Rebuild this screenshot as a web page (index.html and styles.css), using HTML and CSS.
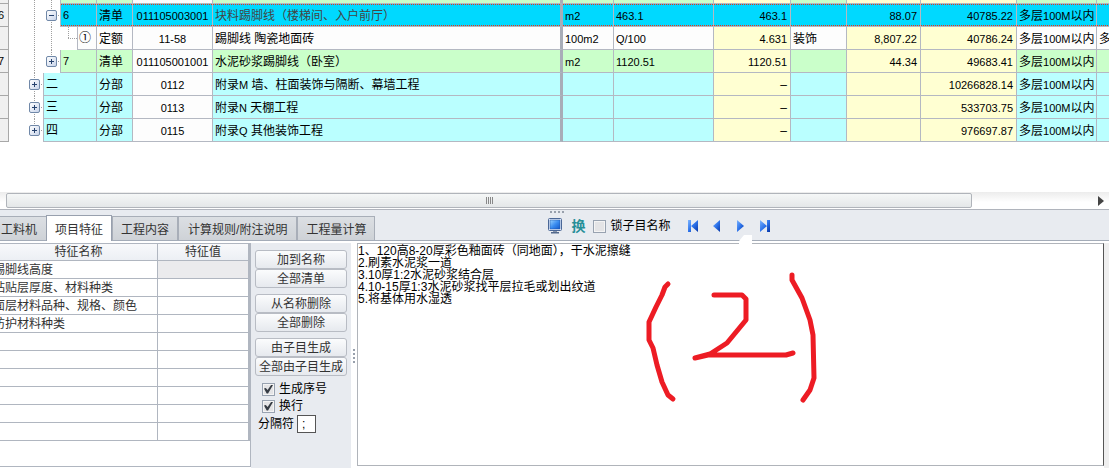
FILE: index.html
```html
<!DOCTYPE html>
<html lang="zh-CN">
<head>
<meta charset="utf-8">
<title>工程量清单</title>
<link rel="stylesheet" href="styles.css">
</head>
<body>
<main class="app">
  <section class="sheet">
    <table class="grid">
      <colgroup>
        <col class="w-row"><col class="w-tree"><col class="w-kind"><col class="w-code"><col class="w-name">
        <col class="w-unit"><col class="w-expr"><col class="w-qty"><col class="w-major"><col class="w-price">
        <col class="w-total"><col class="w-floor"><col class="w-rest">
      </colgroup>
      <tbody>
        <tr class="item cut">
          <th></th><td class="tree"><div class="branch"><span class="gutter deep"></span><span class="seq"></span></div></td>
          <td></td><td class="code"></td><td class="name"></td><td></td><td></td><td class="calc"></td><td></td><td class="calc"></td><td class="calc"></td><td></td><td></td>
        </tr>
        <tr class="item selected">
          <th><span class="n">6</span></th>
          <td class="tree"><div class="branch"><span class="gutter deep"><button class="expander minus" aria-label="折叠"></button></span><span class="seq n">6</span></div></td>
          <td>清单</td><td class="code n">011105003001</td><td class="name">块料踢脚线（楼梯间、入户前厅）</td>
          <td class="n">m2</td><td class="n">463.1</td><td class="calc n">463.1</td><td></td><td class="calc n">88.07</td><td class="calc n">40785.22</td><td>多层<span class="n">100M</span>以内</td><td></td>
        </tr>
        <tr class="quota">
          <th></th>
          <td class="tree"><div class="branch"><span class="gutter leaf"></span><span class="seq">①</span></div></td>
          <td>定额</td><td class="code n">11-58</td><td class="name">踢脚线 陶瓷地面砖</td>
          <td class="n">100m2</td><td class="n">Q/100</td><td class="calc n">4.631</td><td>装饰</td><td class="calc n">8,807.22</td><td class="calc n">40786.24</td><td>多层<span class="n">100M</span>以内</td><td>多层</td>
        </tr>
        <tr class="item">
          <th><span class="n">7</span></th>
          <td class="tree"><div class="branch"><span class="gutter deep last"><button class="expander" aria-label="展开"></button></span><span class="seq n">7</span></div></td>
          <td>清单</td><td class="code n">011105001001</td><td class="name">水泥砂浆踢脚线（卧室）</td>
          <td class="n">m2</td><td class="n">1120.51</td><td class="calc n">1120.51</td><td></td><td class="calc n">44.34</td><td class="calc n">49683.41</td><td>多层<span class="n">100M</span>以内</td><td></td>
        </tr>
        <tr class="part">
          <th></th>
          <td class="tree"><div class="branch"><span class="gutter"><button class="expander" aria-label="展开"></button></span><span class="seq">二</span></div></td>
          <td>分部</td><td class="code n">0112</td><td class="name">附录<span class="n">M</span> 墙、柱面装饰与隔断、幕墙工程</td>
          <td></td><td></td><td class="calc dash">–</td><td></td><td class="calc"></td><td class="calc n">10266828.14</td><td>多层<span class="n">100M</span>以内</td><td></td>
        </tr>
        <tr class="part">
          <th></th>
          <td class="tree"><div class="branch"><span class="gutter"><button class="expander" aria-label="展开"></button></span><span class="seq">三</span></div></td>
          <td>分部</td><td class="code n">0113</td><td class="name">附录<span class="n">N</span> 天棚工程</td>
          <td></td><td></td><td class="calc dash">–</td><td></td><td class="calc"></td><td class="calc n">533703.75</td><td>多层<span class="n">100M</span>以内</td><td></td>
        </tr>
        <tr class="part">
          <th></th>
          <td class="tree"><div class="branch"><span class="gutter last"><button class="expander" aria-label="展开"></button></span><span class="seq">四</span></div></td>
          <td>分部</td><td class="code n">0115</td><td class="name">附录<span class="n">Q</span> 其他装饰工程</td>
          <td></td><td></td><td class="calc dash">–</td><td></td><td class="calc"></td><td class="calc n">976697.87</td><td>多层<span class="n">100M</span>以内</td><td></td>
        </tr>
      </tbody>
    </table>
  </section>

  <div class="hscroll">
    <div class="thumb"><i></i><i></i><i></i><i></i></div>
    <button class="arrow" aria-label="向右滚动"><svg width="6" height="10" viewBox="0 0 6 10"><path d="M0 0L6 5L0 10Z" fill="#444"/></svg></button>
  </div>

  <div class="tabbar">
    <span class="grip-top"><i></i><i></i><i></i><i></i></span>
    <div class="tabs" role="tablist">
      <button class="tab first" role="tab">工料机</button>
      <button class="tab active" role="tab" aria-selected="true">项目特征</button>
      <button class="tab" role="tab">工程内容</button>
      <button class="tab wide" role="tab">计算规则/附注说明</button>
      <button class="tab" role="tab">工程量计算</button>
    </div>
    <div class="tools">
      <button class="tool" aria-label="显示">
        <svg width="16" height="16" viewBox="0 0 16 16">
          <defs><linearGradient id="scr" x1="0" y1="0" x2="1" y2="1"><stop offset="0" stop-color="#9ad4ff"/><stop offset=".5" stop-color="#3b8df0"/><stop offset="1" stop-color="#1257c8"/></linearGradient></defs>
          <rect x="1.500" y=".5" width="13" height="12" rx="1" fill="#f2f6fc" stroke="#4a6796"/>
          <rect x="3" y="2" width="10" height="9" fill="url(#scr)" stroke="#2158ae" stroke-width=".6"/>
          <path d="M6 13h4v1H6z" fill="#8895ab"/><path d="M4 14h8v1.500H4z" fill="#53698c"/>
        </svg>
      </button>
      <button class="tool swap">换</button>
      <label class="lock"><input type="checkbox" class="box">锁子目名称</label>
      <div class="pager">
        <svg width="0" height="0" class="defs"><defs><linearGradient id="nav" x1="0" y1="0" x2="1" y2="1"><stop offset="0" stop-color="#7db4ff"/><stop offset=".5" stop-color="#2d73ea"/><stop offset="1" stop-color="#0636a8"/></linearGradient></defs></svg>
        <button class="tool" aria-label="第一条"><svg width="10" height="12" viewBox="0 0 10 12"><path d="M0 0h3v12H0zM10 0v12L3 6z" fill="url(#nav)"/></svg></button>
        <button class="tool" aria-label="上一条"><svg width="10" height="12" viewBox="0 0 10 12"><path d="M8 0v12L1 6z" fill="url(#nav)"/></svg></button>
        <button class="tool" aria-label="下一条"><svg width="10" height="12" viewBox="0 0 10 12"><path d="M1 0v12L8 6z" fill="url(#nav)"/></svg></button>
        <button class="tool" aria-label="最后一条"><svg width="10" height="12" viewBox="0 0 10 12"><path d="M0 0v12L7 6zM7 0h3v12H7z" fill="url(#nav)"/></svg></button>
      </div>
    </div>
  </div>

  <section class="detail">
    <div class="traits">
      <table class="trait-table">
        <colgroup><col><col class="w-value"></colgroup>
        <thead><tr><th>特征名称</th><th>特征值</th></tr></thead>
        <tbody>
          <tr class="current"><td>踢脚线高度</td><td></td></tr>
          <tr><td>粘贴层厚度、材料种类</td><td></td></tr>
          <tr><td>面层材料品种、规格、颜色</td><td></td></tr>
          <tr><td>防护材料种类</td><td></td></tr>
          <tr><td></td><td></td></tr>
          <tr><td></td><td></td></tr>
          <tr><td></td><td></td></tr>
          <tr><td></td><td></td></tr>
          <tr><td></td><td></td></tr>
          <tr><td></td><td></td></tr>
        </tbody>
      </table>
    </div>

    <div class="actions">
      <div class="pair"><button>加到名称</button><button>全部清单</button></div>
      <div class="pair"><button>从名称删除</button><button>全部删除</button></div>
      <div class="pair"><button>由子目生成</button><button>全部由子目生成</button></div>
      <div class="options">
        <label><input type="checkbox" class="box" checked>生成序号</label>
        <label><input type="checkbox" class="box" checked>换行</label>
      </div>
      <label class="separator">分隔符<input type="text" value=";"></label>
    </div>

    <div class="splitter"><i></i><i></i><i></i><i></i></div>

    <div class="editor">
      <textarea aria-label="项目特征" spellcheck="false">1、120高8-20厚彩色釉面砖（同地面），干水泥擦缝
2.刷素水泥浆一道
3.10厚1:2水泥砂浆结合层
4.10-15厚1:3水泥砂浆找平层拉毛或划出纹道
5.将基体用水湿透</textarea>
      <svg class="ink" width="470" height="180" viewBox="0 0 470 180">
        <path class="patch" d="M382 11V7L387 1H395V11Z"/>
        <path d="M311 50L308 53L305 61L299 73L292 88V106L296 114L300 131L305 148L311 161L316 165"/>
        <path d="M357 61H385L389 65V86L370 109L353 120L338 124L351 121H429L436 119"/>
        <path d="M435 41V46L445 64L453 86L456 101L457 144L453 156L446 166"/>
      </svg>
    </div>
    <div class="vscroll"></div>
  </section>
</main>
</body>
</html>
```

FILE: styles.css
```css
* { box-sizing: border-box; }

body {
  margin: 0;
  background: #fff;
  color: #000;
  font: 12px/14px "Liberation Sans", "Noto Sans CJK SC", sans-serif;
}

button, input, textarea { font: inherit; color: inherit; }
button { margin: 0; padding: 0; border: 0; background: none; }
svg { display: block; }

.app { display: flex; flex-direction: column; min-height: 100vh; overflow: hidden; }
.n { font-size: 11px; }

/* bill of quantities */
.sheet { padding-bottom: 50px; }
.grid { width: 100%; table-layout: fixed; border-collapse: separate; border-spacing: 0; }
.w-row { width: 9px; }
.w-tree { width: 88px; }
.w-kind { width: 36px; }
.w-code { width: 80px; }
.w-unit { width: 51px; }
.w-expr { width: 100px; }
.w-qty { width: 77px; }
.w-major { width: 56px; }
.w-price { width: 74px; }
.w-total { width: 96px; }
.w-floor { width: 80px; }
.w-rest { width: 12px; }

.grid td, .grid th {
  height: 23px;
  padding: 1px 2px 0;
  border-right: 1px solid #b4b8c2;
  border-bottom: 1px solid #b4b8c2;
  overflow: hidden;
  white-space: nowrap;
  font-weight: normal;
  text-align: left;
}
.grid th { padding: 0; background: #f0f0f0; border-color: #a8a8a8; text-indent: -2px; }
.grid .cut td, .grid .cut th { height: 4px; }
.grid td:last-child { border-right: 0; }
.grid td.name { border-right: 3px solid #a8adb8; }
.grid td.code { background: #fdfdfd; text-align: center; }
.grid td.calc { background: #ffffd2; text-align: right; padding-right: 3px; }
.item td, .item .seq { background: #caffca; }
.quota td, .quota .seq { background: #fdfdfd; }
.part td, .part .seq { background: #baffff; }
.grid .selected td, .selected .seq { background: #00d9ff; }
.grid .selected td:not(.tree), .selected .seq {
  background-image: linear-gradient(90deg, #f03010 50%, transparent 50%), linear-gradient(90deg, #f03010 50%, transparent 50%);
  background-size: 2px 1px;
  background-position: 0 0, 0 100%;
  background-repeat: repeat-x;
}
.grid .selected .name { color: #444; }

.grid td.tree { padding: 0; border-bottom: 0; background: #fff; }
.branch { display: flex; height: 23px; }
.cut .branch { height: 4px; }
.seq {
  flex: 1;
  padding: 4px 2px;
  border-left: 1px solid #b4b8c2;
  border-bottom: 1px solid #b4b8c2;
}
.cut .seq { padding: 0; }
.quota .seq { padding-left: 1px; }
.gutter {
  --v: repeating-linear-gradient(#a0a0a0 0 1px, transparent 1px 2px);
  --h: repeating-linear-gradient(90deg, #a0a0a0 0 1px, transparent 1px 2px);
  display: flex;
  justify-content: flex-end;
  align-items: center;
  width: 34px;
  padding-right: 3px;
  background: var(--v) 25px 0 / 1px 100% no-repeat, var(--h) 28px 11px / 6px 1px no-repeat;
}
.gutter.last { background-size: 1px 50%, 6px 1px; }
.gutter.deep {
  width: 51px;
  background: var(--v) 25px 0 / 1px 100% no-repeat, var(--v) 42px 0 / 1px 100% no-repeat, var(--h) 45px 11px / 6px 1px no-repeat;
}
.gutter.deep.last { background-size: 1px 100%, 1px 50%, 6px 1px; }
.cut .gutter.deep { background-size: 1px 100%, 1px 100%, 0 0; }
.gutter.leaf {
  width: 68px;
  background: var(--v) 25px 0 / 1px 100% no-repeat, var(--v) 42px 0 / 1px 100% no-repeat, var(--v) 59px 0 / 1px 50% no-repeat, var(--h) 59px 11px / 9px 1px no-repeat;
}
.expander {
  width: 11px;
  height: 11px;
  border: 1px solid #7088a8;
  border-radius: 2px;
  background:
    linear-gradient(#26426e, #26426e) center / 5px 1px no-repeat,
    linear-gradient(#26426e, #26426e) center / 1px 5px no-repeat,
    linear-gradient(135deg, #fff, #c8d4ea);
}
.expander.minus {
  background:
    linear-gradient(#26426e, #26426e) center / 5px 1px no-repeat,
    linear-gradient(135deg, #fff, #c8d4ea);
}

/* horizontal scroll bar */
.hscroll {
  display: flex;
  align-items: center;
  height: 17px;
  padding: 0 5px 0 6px;
  background: linear-gradient(#ececec, #fff 60%);
}
.thumb {
  display: flex;
  justify-content: center;
  align-items: center;
  gap: 1px;
  flex: 1;
  height: 15px;
  margin-right: 126px;
  border: 1px solid #b0b4ba;
  border-radius: 2px;
  background: linear-gradient(#f5f7f7, #e4e7e8);
}
.thumb i { width: 1px; height: 7px; background: #888; }

/* tabs and tools */
.tabbar {
  position: relative;
  display: flex;
  align-items: flex-end;
  height: 32px;
  border-top: 1px solid #b0b4bc;
  border-bottom: 1px solid #a4acb8;
  background: #e8ebf0;
}
.tabs { display: flex; align-items: flex-end; }
.tab {
  height: 24px;
  padding: 2px 8px 0;
  border: solid #a8aeb8;
  border-width: 1px 1px 0 1px;
  background: linear-gradient(#dcdfe3, #ced2d7);
  color: #333;
}
.tab.first { padding: 2px 9px 0 1px; border-left: 0; border-right: 0; }
.tab.active { height: 26px; margin-bottom: -1px; background: #fff; border-color: #98a0ae; }
.tab.wide { padding: 2px 9px 0; }
.tools { display: flex; align-items: center; height: 28px; margin-left: 172px; }
.tool { display: block; }
.swap { margin: 0 8px; color: #268f98; font-size: 14px; font-weight: bold; }
.lock { display: flex; align-items: center; gap: 4px; }
.pager { display: flex; gap: 14px; margin-left: 18px; }
.defs { position: absolute; }
.grip-top { position: absolute; top: 1px; left: 50%; display: flex; gap: 2px; margin-left: -5px; }
.grip-top i { width: 2px; height: 2px; background: #98a0ac; }

.box {
  display: flex;
  justify-content: center;
  align-items: center;
  appearance: none;
  width: 13px;
  height: 13px;
  margin: 0;
  border: 1px solid #98a2b0;
  background: #e4e4e6;
  box-shadow: inset 0 0 0 1px #f4f4f4;
}
.box:checked::after {
  content: "";
  width: 9px;
  height: 9px;
  background: #363c44;
  clip-path: polygon(0 45%, 20% 38%, 40% 62%, 82% 0, 100% 5%, 45% 100%, 30% 100%);
}

/* detail panes */
.detail { display: flex; flex: 1; padding-top: 2px; min-height: 227px; }
.traits { width: 251px; margin-bottom: 1px; border: solid #b0b6c0; border-width: 1px 1px 1px 0; overflow: hidden; }
.trait-table { width: 100%; table-layout: fixed; border-collapse: separate; border-spacing: 0; color: #333; }
.w-value { width: 92px; }
.trait-table th, .trait-table td {
  height: 18px;
  padding: 0;
  border-right: 1px solid #b0b6c0;
  border-bottom: 1px solid #b0b6c0;
  line-height: 14px;
  white-space: nowrap;
  font-weight: normal;
}
.trait-table th { height: 17px; background: linear-gradient(#f8f9fb, #eceff4); }
.trait-table th:last-child, .trait-table td:last-child { border-right-width: 2px; }
.trait-table td { text-indent: -7px; }
.trait-table .current td:last-child { background: #ebebed; }

.actions { width: 100px; padding: 7px 4px 0; background: #e8ebf0; color: #000; }
.pair { margin-bottom: 6px; }
.pair button {
  display: block;
  width: 100%;
  height: 19px;
  border: 1px solid #b8bcc4;
  border-radius: 3px;
  background: linear-gradient(#fbfcfd, #e6e9ee);
  color: #333;
  line-height: 14px;
}
.options { display: grid; gap: 3px; padding: 0 0 0 7px; }
.options label { display: flex; align-items: center; gap: 4px; }
.separator { display: flex; align-items: center; gap: 3px; padding: 2px 0 0 3px; }
.separator input { width: 19px; height: 18px; padding: 0 4px; border: 1px solid #555; background: #fff; }

.splitter { display: flex; flex-direction: column; justify-content: center; align-items: center; gap: 2px; width: 6px; background: #fff; }
.splitter i { width: 2px; height: 2px; background: #98a0ac; }

.editor { position: relative; display: flex; flex: 1; margin-bottom: 2px; }
textarea {
  flex: 1;
  margin: 0;
  padding: 1px 0;
  border: 1px solid #b0b4ba;
  border-right-color: #555;
  outline: 0;
  resize: none;
  background: #fff;
  line-height: 12px;
}
.ink {
  position: absolute;
  top: -9px;
  left: 0;
  fill: none;
  stroke: #ed1c24;
  stroke-width: 5;
  stroke-linecap: round;
  stroke-linejoin: round;
  pointer-events: none;
}
.ink .patch { fill: #fff; stroke: none; }
.vscroll { width: 5px; background: #efefef; }
```
